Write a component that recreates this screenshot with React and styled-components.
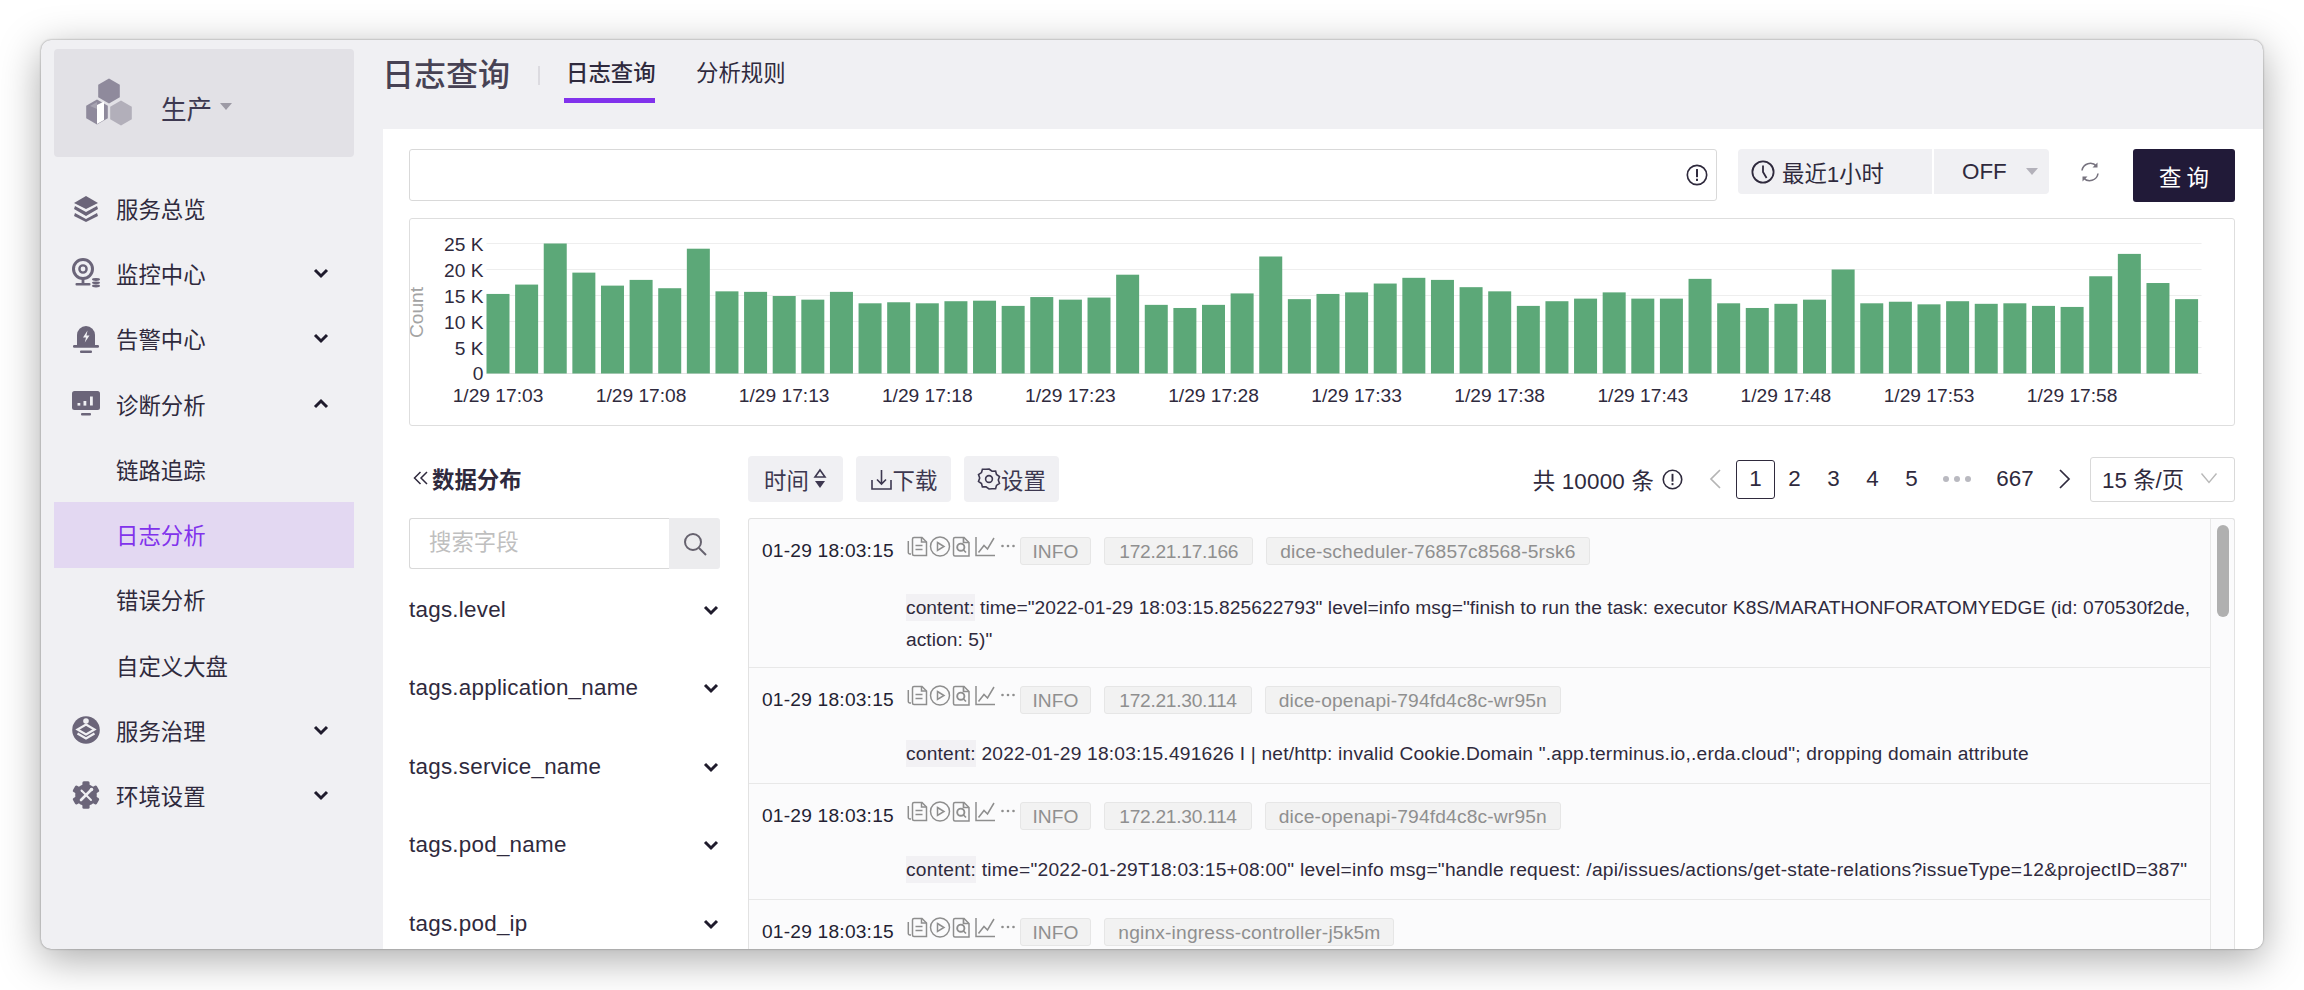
import React from "react";
import styled, { createGlobalStyle } from "styled-components";

const SANS = `"Liberation Sans", "Noto Sans CJK SC", sans-serif`;
const INK = "#2f2a3d";
const ICON = "#6b6579";

const Global = createGlobalStyle`
  html, body { margin: 0; padding: 0; background: #fff; overflow: hidden; }
  body { font-family: ${SANS}; color: ${INK}; }
  * { box-sizing: border-box; }
`;

const Page = styled.div`
  width: 2304px;
  height: 990px;
  padding: 40px 41px 41px;
  background: #fff;
`;
const Win = styled.div`
  width: 2222px;
  height: 909px;
  display: flex;
  overflow: hidden;
  border-radius: 10px;
  background: #f0f0f3;
  box-shadow: 0 10px 42px rgba(0, 0, 0, 0.34), 0 0 2px rgba(0, 0, 0, 0.45);
`;

/* sidebar */
const Side = styled.aside`
  width: 342px;
  flex: none;
  padding: 9px 29px 0 13px;
`;
const EnvCard = styled.div`
  height: 108px;
  border-radius: 4px;
  background: #e2e1e6;
  display: flex;
  align-items: center;
  padding: 0 0 0 30px;
  margin-bottom: 19px;
`;
const EnvName = styled.span`
  font-size: 25.6px;
  margin-left: 27px;
  margin-top: 8px;
  color: #3d3850;
`;
const Caret = styled.span`
  width: 0;
  height: 0;
  margin: 7px 0 0 8px;
  border-left: 6px solid transparent;
  border-right: 6px solid transparent;
  border-top: 7px solid #9d9aa5;
`;
const MenuItem = styled.div`
  height: 65.3px;
  display: flex;
  align-items: center;
  padding: 0 24px 2px 15px;
  font-size: 22.4px;
  color: ${(p) => (p.$active ? "#8132ec" : INK)};
  background: ${(p) => (p.$active ? "#e3d8f2" : "transparent")};
`;
const MenuIcon = styled.span`
  width: 34px;
  height: 34px;
  flex: none;
  margin-right: 13px;
  display: flex;
  align-items: center;
  justify-content: center;
`;
const MenuLabel = styled.span`
  flex: 1;
  padding-left: ${(p) => (p.$sub ? "47px" : "0")};
`;

/* main */
const Main = styled.main`
  flex: 1;
  min-width: 0;
  display: flex;
  flex-direction: column;
`;
const Head = styled.header`
  height: 89px;
  flex: none;
  display: flex;
  align-items: flex-start;
`;
const Title = styled.h1`
  margin: 13px 0 0 -1px;
  font-size: 32px;
  font-weight: 500;
  line-height: 44px;
  color: #474254;
`;
const Sep = styled.span`
  width: 2px;
  height: 19px;
  margin: 26px 24px 0 28px;
  background: #dcdbe0;
`;
const Tab = styled.div`
  height: 63px;
  margin: 0 39px 0 0;
  padding: 18px 0 0 2px;
  width: ${(p) => (p.$on ? "91px" : "auto")};
  white-space: nowrap;
  font-size: 22.4px;
  line-height: 32px;
  font-weight: ${(p) => (p.$on ? 500 : 400)};
  color: ${INK};
  border-bottom: ${(p) => (p.$on ? "5px solid #8132ec" : "none")};
`;
const Panel = styled.section`
  flex: 1;
  min-height: 0;
  background: #fff;
  padding: 20px 28px 0 26px;
  overflow: hidden;
`;
const TopBar = styled.div`
  display: flex;
  align-items: flex-start;
  height: 52px;
`;
const QueryBox = styled.div`
  width: 1308px;
  height: 52px;
  border: 1.5px solid #d9d9d9;
  border-radius: 3px;
  display: flex;
  align-items: center;
  justify-content: flex-end;
  padding-right: 8px;
`;
const TimeGroup = styled.div`
  margin-left: 21px;
  width: 311px;
  height: 45px;
  display: flex;
  gap: 2px;
`;
const TimeSeg = styled.div`
  height: 45px;
  background: #f0f0f3;
  display: flex;
  align-items: center;
  font-size: 22.4px;
  color: ${INK};
  border-radius: ${(p) => (p.$end ? "0 4px 4px 0" : "4px 0 0 4px")};
  width: ${(p) => (p.$end ? "115px" : "194px")};
  padding-left: ${(p) => (p.$end ? "28px" : "13px")};
`;
const TimeText = styled.span`
  margin-left: 7px;
`;
const SegCaret = styled.span`
  width: 0;
  height: 0;
  margin-left: 19px;
  border-left: 6px solid transparent;
  border-right: 6px solid transparent;
  border-top: 7px solid #b3b1ba;
`;
const Refresh = styled.span`
  margin-left: 29px;
  margin-top: 11px;
  width: 24px;
  height: 24px;
  display: flex;
`;
const QueryBtn = styled.button`
  margin-left: 31px;
  width: 102px;
  height: 53px;
  border: 0;
  border-radius: 3px;
  background: #211a38;
  color: #fff;
  font-family: ${SANS};
  font-size: 22.4px;
  letter-spacing: 5px;
  text-indent: 5px;
`;
const ChartBox = styled.div`
  margin-top: 17px;
  width: 100%;
  height: 208px;
  border: 1.5px solid #dedede;
  border-radius: 3px;
  svg {
    display: block;
  }
`;
const Lower = styled.div`
  margin-top: 30px;
  display: flex;
  gap: 28px;
`;
const Fields = styled.div`
  width: 311px;
  flex: none;
`;
const FieldsHead = styled.div`
  height: 46px;
  display: flex;
  align-items: center;
  font-size: 22.4px;
  font-weight: 700;
  margin-bottom: 16px;
  padding: 0 0 2px 4px;
`;
const DoubleArrow = styled.span`
  display: flex;
  margin-right: 3px;
`;
const FieldSearch = styled.div`
  display: flex;
  height: 51px;
`;
const FieldInput = styled.div`
  width: 260px;
  border: 1.5px solid #d9d9d9;
  border-right: 0;
  border-radius: 3px 0 0 3px;
  padding-left: 19px;
  line-height: 48px;
  font-size: 22.4px;
  color: #bfbfbf;
`;
const FieldBtn = styled.div`
  width: 51px;
  background: #ececee;
  border-radius: 0 3px 3px 0;
  display: flex;
  align-items: center;
  justify-content: center;
`;
const FieldList = styled.div`
  padding-top: 1.5px;
`;
const FieldRow = styled.div`
  height: 78.5px;
  display: flex;
  align-items: center;
  justify-content: space-between;
  font-size: 22.4px;
  letter-spacing: 0.25px;
  padding-right: 0;
`;
const Logs = styled.div`
  flex: 1;
  min-width: 0;
`;
const LogTools = styled.div`
  height: 46px;
  display: flex;
  align-items: center;
  margin-bottom: 16px;
`;
const ToolBtn = styled.div`
  width: 95px;
  height: 46px;
  margin-right: 13px;
  background: #f0f0f3;
  border-radius: 4px;
  display: flex;
  align-items: center;
  justify-content: center;
  font-size: 22.4px;
  color: #3d3850;
`;
const Total = styled.span`
  margin-left: auto;
  font-size: 22.4px;
  letter-spacing: 0.2px;
  color: ${INK};
  white-space: nowrap;
`;
const Pages = styled.div`
  display: flex;
  align-items: center;
  margin-left: 8px;
`;
const PageNum = styled.span`
  width: ${(p) => p.$w || 39}px;
  height: 39px;
  flex: none;
  margin-left: ${(p) => p.$ml || 0}px;
  display: flex;
  align-items: center;
  justify-content: center;
  font-size: 22.4px;
  color: ${INK};
  border: ${(p) => (p.$on ? `1.5px solid ${INK}` : "none")};
  border-radius: 3px;
`;
const PageSelect = styled.div`
  margin-left: 6px;
  width: 145px;
  height: 45px;
  border: 1.5px solid #d9d9d9;
  border-radius: 3px;
  display: flex;
  align-items: center;
  justify-content: space-between;
  padding: 0 16px 2px 11px;
  font-size: 22.4px;
`;
const LogBox = styled.div`
  height: 440px;
  border: 1.5px solid #e2e2e2;
  border-bottom: 0;
  border-radius: 3px 3px 0 0;
  background: #fbfbfc;
  display: flex;
  overflow: hidden;
`;
const LogList = styled.div`
  flex: 1;
  min-width: 0;
`;
const Track = styled.div`
  width: 24px;
  flex: none;
  border-left: 1.5px solid #e8e8e8;
  padding: 6px 5px 0 5.5px;
`;
const Thumb = styled.div`
  height: 92px;
  border-radius: 7px;
  background: #b0b0b0;
`;
const LogRow = styled.div`
  height: ${(p) => p.$h}px;
  border-bottom: 1.5px solid #e8e8e8;
  padding: 18px 0 0 13px;
`;
const RowTop = styled.div`
  display: flex;
  align-items: center;
  height: 28px;
`;
const LogTime = styled.span`
  width: 144px;
  flex: none;
  font-size: 19.2px;
  letter-spacing: 0.2px;
  color: #241f33;
  white-space: nowrap;
`;
const ActionIcons = styled.span`
  width: 113.5px;
  flex: none;
  display: flex;
  position: relative;
  top: -4px;
`;
const Tag = styled.span`
  height: 28px;
  margin-right: 13px;
  padding: 0 ${(p) => p.$pad}px;
  border: 1.5px solid #e6e6e6;
  border-radius: 3px;
  background: #f2f2f2;
  color: #8f8f8f;
  font-size: 19.2px;
  letter-spacing: ${(p) => p.$ls || 0}px;
  line-height: 27px;
  white-space: nowrap;
`;
const Content = styled.div`
  margin: ${(p) => p.$mt}px 0 0 144px;
  font-size: 19.2px;
  letter-spacing: ${(p) => p.$ls}px;
  line-height: 31.5px;
  color: ${INK};
`;
const Key = styled.span`
  background: #f2f1f4;
  padding: 3px 0;
`;

/* ---- drawings ---- */
const Svg = ({ s = 34, vb = "0 0 34 34", children, ...r }) => (
  <svg width={s} height={s} viewBox={vb} {...r}>{children}</svg>
);
const hexPts = (cx, cy, r) =>
  [0, 60, 120, 180, 240, 300]
    .map((a) => {
      const t = ((a - 90) * Math.PI) / 180;
      return `${(cx + r * Math.cos(t)).toFixed(1)},${(cy + r * Math.sin(t)).toFixed(1)}`;
    })
    .join(" ");

const Logo = () => (
  <svg width="50" height="50" viewBox="0 0 50 50">
    <polygon points={hexPts(25, 13, 12.5)} fill="#8f8a9c" />
    <polygon points={hexPts(13, 34, 12.5)} fill="#8f8a9c" />
    <polygon points="13,27 20,23.500 20,42 13,46" fill="#fff" />
    <polygon points="6,28 13,31 13,24" fill="#a7a3b1" />
    <polygon points={hexPts(37, 35, 12.5)} fill="#b2afba" />
  </svg>
);
const LayersIcon = () => (
  <Svg>
    <g fill={ICON}>
      <polygon points="17,5 29,12 17,18 5,12" />
      <polygon points="6,15 17,21 28,15 29,18 17,25 5,18" />
      <polygon points="6,22 17,28 28,22 29,25 17,31 5,25" />
    </g>
  </Svg>
);
const CamIcon = () => (
  <Svg>
    <circle cx="14" cy="13" r="9.500" fill="none" stroke={ICON} strokeWidth="3" />
    <circle cx="14" cy="13" r="3.600" fill="none" stroke={ICON} strokeWidth="2.400" />
    <rect x="12.600" y="23" width="2.800" height="5" fill={ICON} />
    <rect x="6.500" y="27" width="15" height="2.600" rx="1" fill={ICON} />
    <ellipse cx="27" cy="23.500" rx="4" ry="1.400" fill={ICON} />
    <ellipse cx="27" cy="26.800" rx="4" ry="1.400" fill={ICON} />
    <ellipse cx="27" cy="30" rx="4" ry="1.400" fill={ICON} />
  </Svg>
);
const AlarmIcon = () => (
  <Svg>
    <path d="M8 25V14a9 9 0 0 1 18 0v11z" fill={ICON} />
    <rect x="4" y="24" width="26" height="2.800" rx="1.200" fill={ICON} />
    <rect x="11" y="29.500" width="12" height="2.400" rx="1" fill={ICON} />
    <path d="M18.500 9.500l-4.500 7h3l-1.200 5 4.700-7h-3z" fill="#f0f0f3" />
  </Svg>
);
const MonitorIcon = () => (
  <Svg>
    <rect x="3" y="4" width="28" height="19" rx="2.500" fill={ICON} />
    <rect x="12" y="26" width="10" height="2.600" rx="1" fill={ICON} />
    <rect x="8.500" y="16" width="2.800" height="2.600" fill="#f0f0f3" />
    <rect x="14.500" y="14" width="2.800" height="4.600" fill="#f0f0f3" />
    <rect x="21" y="9.500" width="2.800" height="9" fill="#f0f0f3" />
  </Svg>
);
const GovernIcon = () => (
  <Svg>
    <circle cx="17" cy="17" r="13.800" fill={ICON} />
    <circle cx="17" cy="8" r="2.800" fill="#f0f0f3" />
    <path d="M17 11.500l8.500 5L17 21.500l-8.500-5z" fill="none" stroke="#f0f0f3" strokeWidth="2.200" />
    <path d="M8.500 20.500L17 25.500l8.500-5" fill="none" stroke="#f0f0f3" strokeWidth="2.200" />
  </Svg>
);
const GearIcon = () => (
  <Svg>
    <g fill={ICON}>
      <circle cx="17" cy="17" r="10.800" />
      {[0, 60, 120, 180, 240, 300].map((a) => (
        <rect key={a} x="13.400" y="3.200" width="7.200" height="7" rx="1.500" transform={`rotate(${a} 17 17)`} />
      ))}
    </g>
    <path d="M12.500 12.500l9.500 9.500" stroke="#f0f0f3" strokeWidth="2" strokeLinecap="round" />
    <path d="M22 12L12 22" stroke="#f0f0f3" strokeWidth="2.600" strokeLinecap="round" />
    <circle cx="22.500" cy="11.500" r="1.800" fill="#f0f0f3" />
  </Svg>
);
const Chevron = ({ up, s = 18, w = 3 }) => (
  <svg width={s} height={s} viewBox="0 0 18 18">
    <path d={up ? "M3 12l6-6 6 6" : "M3 6l6 6 6-6"} fill="none" stroke="#1f1b2c" strokeWidth={w} />
  </svg>
);
const Info = ({ s = 20, c = INK }) => (
  <svg width={s} height={s} viewBox="0 0 20 20">
    <circle cx="10" cy="10" r="8.800" fill="none" stroke={c} strokeWidth="1.500" />
    <rect x="9.100" y="4.600" width="1.800" height="7.400" fill={c} />
    <rect x="9.100" y="13.400" width="1.800" height="2" fill={c} />
  </svg>
);
const Clock = () => (
  <svg width="24" height="24" viewBox="0 0 24 24">
    <circle cx="12" cy="12" r="10.600" fill="none" stroke={INK} strokeWidth="1.800" />
    <path d="M12 5.500V12l3.600 6" fill="none" stroke={INK} strokeWidth="1.800" />
  </svg>
);
const RefreshIcon = () => (
  <svg width="24" height="24" viewBox="0 0 24 24" fill="none" stroke="#77737f" strokeWidth="1.600">
    <path d="M4 10.500a8.400 8.400 0 0 1 14.500-4.400" />
    <path d="M20 13.500a8.400 8.400 0 0 1-14.500 4.400" />
    <path d="M19.500 2.500v5h-5" stroke="none" fill="#77737f" />
    <path d="M4.500 21.500v-5h5" stroke="none" fill="#77737f" />
  </svg>
);
const SortIcon = () => (
  <svg width="14" height="22" viewBox="0 0 14 22" style={{ marginLeft: 4 }}>
    <path d="M7 2l5 7H2z" fill="none" stroke="#3d3850" strokeWidth="1.600" />
    <path d="M7 20l5-7H2z" fill="#3d3850" />
  </svg>
);
const DownloadIcon = () => (
  <svg width="23" height="23" viewBox="0 0 23 23" fill="none" stroke="#3d3850" strokeWidth="1.600">
    <path d="M2 12v9h19v-9M11.500 2v14M7 11.500l4.500 4.500 4.500-4.500" />
  </svg>
);
const SettingIcon = () => (
  <svg width="24" height="24" viewBox="0 0 24 24" fill="none" stroke="#3d3850" strokeWidth="1.600">
    <path d="M12 2l3 2.200 3.600-.1.900 3.400 3 2-1.200 3.500 1.200 3.400-3 2-.9 3.400-3.600-.1L12 22l-3-2.200-3.600.1-.9-3.400-3-2 1.200-3.400-1.200-3.500 3-2 .9-3.400 3.600.1z" />
    <circle cx="12" cy="12" r="3.400" />
  </svg>
);
const SearchIcon = () => (
  <svg width="26" height="26" viewBox="0 0 26 26" fill="none" stroke="#66626e" strokeWidth="2">
    <circle cx="11" cy="11" r="8" />
    <path d="M17 17l7 7" />
  </svg>
);
const DoubleLeft = () => (
  <svg width="16" height="16" viewBox="0 0 16 16" fill="none" stroke={INK} strokeWidth="1.500">
    <path d="M7.500 2L1.500 8l6 6M14 2L8 8l6 6" />
  </svg>
);
const Angle = ({ left, c }) => (
  <svg width="14" height="22" viewBox="0 0 14 22" fill="none" stroke={c} strokeWidth="1.700">
    <path d={left ? "M12 2L3 11l9 9" : "M2 2l9 9-9 9"} />
  </svg>
);
const ThinDown = () => (
  <svg width="18" height="12" viewBox="0 0 18 12" fill="none" stroke="#b8b8b8" strokeWidth="1.400">
    <path d="M1.500 1.500L9 10.500l7.500-9" />
  </svg>
);
const Actions = () => (
  <svg width="112" height="26" viewBox="0 0 112 26" fill="none" stroke="#8e8e8e" strokeWidth="1.500">
    <path d="M5 20h-1.200a1.500 1.500 0 0 1-1.500-1.500V7" />
    <path d="M8 3.500h8l4.500 4.500v13.500H8a1.500 1.500 0 0 1-1.500-1.500V5a1.500 1.500 0 0 1 1.500-1.500z" />
    <path d="M15.500 3.500V8h5M9.500 11.500h7M9.500 15.500h7" />
    <circle cx="34" cy="12.500" r="9.500" />
    <path d="M31.500 8.500l6.500 4-6.500 4z" />
    <path d="M49 3.500h9l5 5v13.500H49a1.500 1.500 0 0 1-1.500-1.500V5A1.500 1.500 0 0 1 49 3.500z" />
    <circle cx="54.800" cy="13.200" r="3.600" strokeWidth="1.900" />
    <path d="M57.500 16l2.500 2.500M57.500 3.500v5h5.500" strokeWidth="1.700" />
    <path d="M70 3v18.500h19" />
    <path d="M72.500 18.500l5.500-7 3.500 3.500L88 4" />
    <g fill="#8e8e8e" stroke="none">
      <circle cx="96.500" cy="12" r="1.300" />
      <circle cx="102" cy="12" r="1.300" />
      <circle cx="107.500" cy="12" r="1.300" />
    </g>
  </svg>
);

const VALUES = [
  15.3, 17.1, 25, 19.4, 16.9, 18, 16.4, 24, 15.8, 15.7, 14.9, 14.2, 15.7, 13.5, 13.7, 13.5, 13.9, 14, 13, 14.7,
  14.2, 14.6, 19, 13.2, 12.6, 13.2, 15.4, 22.5, 14.3, 15.3, 15.6, 17.3, 18.4, 18, 16.6, 15.8, 13, 13.9, 14.4,
  15.6, 14.4, 14.4, 18.2, 13.5, 12.6, 13.4, 14.2, 20, 13.5, 13.8, 13.3, 13.9, 13.4, 13.5, 13, 12.8, 18.7, 23,
  17.4, 14.3,
];
const X_LABELS = ["17:03","17:08","17:13","17:18","17:23","17:28","17:33","17:38","17:43","17:48","17:53","17:58"];

const Chart = () => {
  const pitch = 28.62;
  return (
    <svg width="1825" height="205" viewBox="409.5 219.5 1825 205" fontFamily={SANS}>
      {[0, 5, 10, 15, 20, 25].map((v) => (
        <g key={v}>
          <line x1={486} x2={2201} y1={374 - v * 5.2} y2={374 - v * 5.2} stroke={v ? "#eeeeee" : "#e4e4e4"} strokeWidth="1.2" />
          <text x={483} y={374 - v * 5.2 + 7 + (v ? 0 : -1)} textAnchor="end" fontSize="19.2" fill={INK}>
            {v ? `${v} K` : "0"}
          </text>
        </g>
      ))}
      <text transform="translate(422 310) rotate(-90)" textAnchor="middle" x={-3} fontSize="19.2" fill="#a3a3a3">
        Count
      </text>
      {VALUES.map((v, i) => (
        <rect key={i} x={486 + i * pitch} y={374 - v * 5.2} width={23} height={v * 5.2} fill="#5ca878" />
      ))}
      {X_LABELS.map((t, i) => (
        <text key={t} x={497.5 + i * 143.1} y={402.5} textAnchor="middle" fontSize="19.2" fill={INK}>
          {`1/29 ${t}`}
        </text>
      ))}
    </svg>
  );
};

const MENU = [
  { t: "服务总览", i: <LayersIcon /> },
  { t: "监控中心", i: <CamIcon />, c: "down" },
  { t: "告警中心", i: <AlarmIcon />, c: "down" },
  { t: "诊断分析", i: <MonitorIcon />, c: "up" },
  { t: "链路追踪", sub: 1 },
  { t: "日志分析", sub: 1, active: 1 },
  { t: "错误分析", sub: 1 },
  { t: "自定义大盘", sub: 1 },
  { t: "服务治理", i: <GovernIcon />, c: "down" },
  { t: "环境设置", i: <GearIcon />, c: "down" },
];
const FIELDS = ["tags.level", "tags.application_name", "tags.service_name", "tags.pod_name", "tags.pod_ip"];
const ROWS = [
  {
    h: 149, mt: 27, ls: 0.05, ip: "172.21.17.166", pod: "dice-scheduler-76857c8568-5rsk6",
    text: ' time="2022-01-29 18:03:15.825622793" level=info msg="finish to run the task: executor K8S/MARATHONFORATOMYEDGE (id: 070530f2de, action: 5)"',
  },
  {
    h: 115.5, mt: 24, ls: 0.2, ip: "172.21.30.114", pod: "dice-openapi-794fd4c8c-wr95n",
    text: ' 2022-01-29 18:03:15.491626 I | net/http: invalid Cookie.Domain ".app.terminus.io,.erda.cloud"; dropping domain attribute',
  },
  {
    h: 116, mt: 24, ls: 0.24, ip: "172.21.30.114", pod: "dice-openapi-794fd4c8c-wr95n",
    text: ' time="2022-01-29T18:03:15+08:00" level=info msg="handle request: /api/issues/actions/get-state-relations?issueType=12&projectID=387"',
  },
  { h: 60, ip: "", pod: "nginx-ingress-controller-j5k5m" },
];

export default function App() {
  return (
    <Page>
      <Global />
      <Win>
        <Side>
          <EnvCard>
            <Logo />
            <EnvName>生产</EnvName>
            <Caret />
          </EnvCard>
          {MENU.map((m) => (
            <MenuItem key={m.t} $active={m.active}>
              {!m.sub && <MenuIcon>{m.i}</MenuIcon>}
              <MenuLabel $sub={m.sub}>{m.t}</MenuLabel>
              {m.c && <Chevron up={m.c === "up"} />}
            </MenuItem>
          ))}
        </Side>
        <Main>
          <Head>
            <Title>日志查询</Title>
            <Sep />
            <Tab $on>日志查询</Tab>
            <Tab>分析规则</Tab>
          </Head>
          <Panel>
            <TopBar>
              <QueryBox>
                <Info s={22} />
              </QueryBox>
              <TimeGroup>
                <TimeSeg>
                  <Clock />
                  <TimeText>最近1小时</TimeText>
                </TimeSeg>
                <TimeSeg $end>
                  OFF
                  <SegCaret />
                </TimeSeg>
              </TimeGroup>
              <Refresh>
                <RefreshIcon />
              </Refresh>
              <QueryBtn>查询</QueryBtn>
            </TopBar>
            <ChartBox>
              <Chart />
            </ChartBox>
            <Lower>
              <Fields>
                <FieldsHead>
                  <DoubleArrow>
                    <DoubleLeft />
                  </DoubleArrow>
                  数据分布
                </FieldsHead>
                <FieldSearch>
                  <FieldInput>搜索字段</FieldInput>
                  <FieldBtn>
                    <SearchIcon />
                  </FieldBtn>
                </FieldSearch>
                <FieldList>
                  {FIELDS.map((f) => (
                    <FieldRow key={f}>
                      {f}
                      <Chevron />
                    </FieldRow>
                  ))}
                </FieldList>
              </Fields>
              <Logs>
                <LogTools>
                  <ToolBtn>
                    时间
                    <SortIcon />
                  </ToolBtn>
                  <ToolBtn>
                    <DownloadIcon />
                    下载
                  </ToolBtn>
                  <ToolBtn>
                    <SettingIcon />
                    设置
                  </ToolBtn>
                  <Total>共 10000 条</Total>
                  <Pages>
                    <Info s={21} />
                    <PageNum $w={42} $ml={11}>
                      <Angle left c="#b5b5b5" />
                    </PageNum>
                    <PageNum $on>1</PageNum>
                    <PageNum>2</PageNum>
                    <PageNum>3</PageNum>
                    <PageNum>4</PageNum>
                    <PageNum>5</PageNum>
                    <PageNum $w={53}>
                      <svg width="32" height="8" viewBox="0 0 32 8" fill="#b9b9c0">
                        <circle cx="4" cy="4" r="3" />
                        <circle cx="15" cy="4" r="3" />
                        <circle cx="26" cy="4" r="3" />
                      </svg>
                    </PageNum>
                    <PageNum $w={62}>667</PageNum>
                    <PageNum $w={38}>
                      <Angle c={INK} />
                    </PageNum>
                    <PageSelect>
                      15 条/页
                      <ThinDown />
                    </PageSelect>
                  </Pages>
                </LogTools>
                <LogBox>
                  <LogList>
                    {ROWS.map((r, i) => (
                      <LogRow key={i} $h={r.h}>
                        <RowTop>
                          <LogTime>01-29 18:03:15</LogTime>
                          <ActionIcons>
                            <Actions />
                          </ActionIcons>
                          <Tag $pad={12}>INFO</Tag>
                          {r.ip && (
                            <Tag $pad={14} $ls={-0.3}>
                              {r.ip}
                            </Tag>
                          )}
                          <Tag $pad={13} $ls={0.17}>
                            {r.pod}
                          </Tag>
                        </RowTop>
                        {r.text && (
                          <Content $mt={r.mt} $ls={r.ls}>
                            <Key>content:</Key>
                            {r.text}
                          </Content>
                        )}
                      </LogRow>
                    ))}
                  </LogList>
                  <Track>
                    <Thumb />
                  </Track>
                </LogBox>
              </Logs>
            </Lower>
          </Panel>
        </Main>
      </Win>
    </Page>
  );
}
